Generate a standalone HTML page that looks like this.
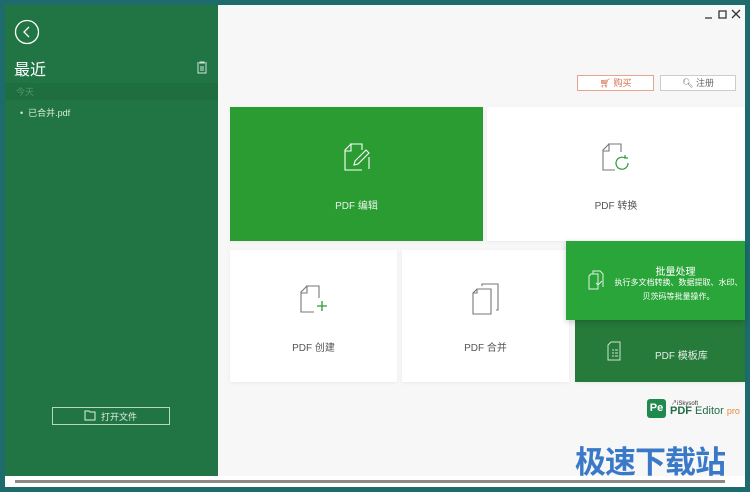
<!DOCTYPE html>
<html><head><meta charset="utf-8"><style>
*{margin:0;padding:0;box-sizing:border-box}
body{width:750px;height:492px;background:#1d6b6c;position:relative;overflow:hidden;font-family:"Liberation Sans","Noto Sans CJK SC",sans-serif}
.a{position:absolute}
.card{position:absolute;background:#fff;text-align:center;font-size:10px;color:#555;box-shadow:0 1px 3px rgba(0,0,0,.06)}
.card svg{position:absolute;left:50%;transform:translateX(-50%)}
</style></head><body>
<div class="a" style="left:5px;top:5px;width:740px;height:482px;background:#fff"></div>
<div class="a" style="left:5px;top:5px;width:213px;height:471px;background:#217545"></div>
<div class="a" style="left:218px;top:5px;width:527px;height:471px;background:#f7f7f7"></div>
<div class="a" style="left:15px;top:480px;width:710px;height:3px;background:#8a8a8a"></div>
<!-- sidebar -->
<svg class="a" style="left:14px;top:19px" width="26" height="26"><circle cx="13" cy="13" r="11.5" fill="none" stroke="#fff" stroke-width="1.3"/><path d="M15 8l-5 5 5 5" fill="none" stroke="#fff" stroke-width="1.3"/></svg>
<div class="a" style="left:14px;top:56px;color:#fff;font-size:16px">最近</div>
<svg class="a" style="left:196px;top:61px" width="12" height="13"><path d="M1 2h10M4 2V1h4v1M2 3v9h8V3M5 5v5M7 5v5" fill="none" stroke="#cfe3d6" stroke-width="1"/></svg>
<div class="a" style="left:5px;top:83px;width:213px;height:17px;background:#1f6e41"></div>
<div class="a" style="left:16px;top:85px;color:#4f9a6b;font-size:9px">今天</div>
<div class="a" style="left:20px;top:106px;color:#d8ead9;font-size:9px">•&nbsp; 已合并.pdf</div>
<div class="a" style="left:52px;top:407px;width:118px;height:18px;border:1px solid #b8d7c1"></div>
<svg class="a" style="left:84px;top:410px" width="13" height="11"><path d="M1 1h4l1 1h5v8H1z" fill="none" stroke="#dfeee3" stroke-width="1"/></svg>
<div class="a" style="left:101px;top:410px;color:#e3f0e6;font-size:9px">打开文件</div>
<!-- window controls -->
<svg class="a" style="left:700px;top:8px" width="42" height="12"><path d="M5 10h7M19 3h7v7h-7zM32 2l8 8M40 2l-8 8" fill="none" stroke="#333" stroke-width="1.3"/></svg>
<!-- buttons -->
<div class="a" style="left:577px;top:75px;width:77px;height:16px;border:1px solid #e3a58f;background:#fff;color:#d0704e;font-size:9px;text-align:center;line-height:14px">🛒︎ 购买</div>
<div class="a" style="left:660px;top:75px;width:76px;height:16px;border:1px solid #ccc;background:#fff;color:#666;font-size:9px;text-align:center;line-height:14px">🔍︎ 注册</div>
<!-- cards -->
<div class="card" style="left:230px;top:107px;width:253px;height:134px;background:#2a9c32;color:#e9f5ea">
<svg style="top:36px" width="26" height="28"><path d="M6 1h12v6M18 27H1V7l6-6M1 8h6V1M25 26V14M11 18l11-11 3 3-11 11-4 1z" fill="none" stroke="#fff" stroke-width="1.1"/></svg>
<div style="position:absolute;top:90px;width:100%">PDF 编辑</div></div>
<div class="card" style="left:487px;top:107px;width:258px;height:134px">
<svg style="top:36px" width="28" height="28"><path d="M6 1h13v8M13 27H1V7l6-6M1 8h6V1" fill="none" stroke="#777" stroke-width="1.1"/><path d="M26 20a6 6 0 1 1-3-5M23 12v3h3" fill="none" stroke="#2a9c32" stroke-width="1.2"/></svg>
<div style="position:absolute;top:90px;width:100%">PDF 转换</div></div>
<div class="card" style="left:230px;top:250px;width:167px;height:132px">
<svg style="top:35px" width="28" height="28"><path d="M6 1h13v12M14 27H1V7l6-6M1 8h6V1" fill="none" stroke="#777" stroke-width="1.1"/><path d="M22 16v10M17 21h10" stroke="#2a9c32" stroke-width="1.3"/></svg>
<div style="position:absolute;top:89px;width:100%">PDF 创建</div></div>
<div class="card" style="left:402px;top:250px;width:167px;height:132px">
<svg style="top:33px" width="28" height="32"><path d="M10 3V1h16v26h-2M5 6h14v25H1V10z M1 10h4V6" fill="none" stroke="#777" stroke-width="1.1"/></svg>
<div style="position:absolute;top:89px;width:100%">PDF 合并</div></div>
<div class="card" style="left:575px;top:320px;width:170px;height:62px;background:#267a3a;color:#e3efe5">
<svg style="left:32px;top:21px;transform:none" width="14" height="20"><path d="M4 1h9v18H1V4zM5 9h2M8 9h3M5 12h2M8 12h3M5 15h2M8 15h3" fill="none" stroke="#cde2d0" stroke-width="1"/></svg>
<div style="position:absolute;top:27px;left:80px">PDF 模板库</div></div>
<div class="card" style="left:566px;top:241px;width:179px;height:79px;background:#2aa53a;color:#fff;box-shadow:0 2px 6px rgba(0,0,0,.2)">
<svg style="left:22px;top:29px;transform:none" width="16" height="20"><path d="M5 4V1h7l3 3v13M3 4h7v15H1V6z M8 13l2 2 4-4" fill="none" stroke="#e0f2e3" stroke-width="1"/></svg>
<div style="position:absolute;left:40px;width:139px;top:22px;font-size:10px">批量处理</div>
<div style="position:absolute;left:46px;width:133px;top:35px;font-size:8px;line-height:14px">执行多文档转换、数据提取、水印、<br>贝茨码等批量操作。</div></div>
<!-- logo -->
<div class="a" style="left:647px;top:399px;width:19px;height:19px;background:#1f8a4c;border-radius:3px;color:#fff;font-size:11px;font-weight:bold;text-align:center;line-height:19px">Pe</div>
<div class="a" style="left:671px;top:398px;font-size:6px;color:#333">↗iSkysoft</div>
<div class="a" style="left:670px;top:405px;font-size:11px;color:#1f6e46;white-space:nowrap"><b>PDF</b> Editor <span style="color:#e08a3c;font-size:9px">pro</span></div>
<div class="a" style="left:575px;top:437px;font-size:31px;font-weight:bold;color:#3a79c8;letter-spacing:-1px">极速下载站</div>
</body></html>
